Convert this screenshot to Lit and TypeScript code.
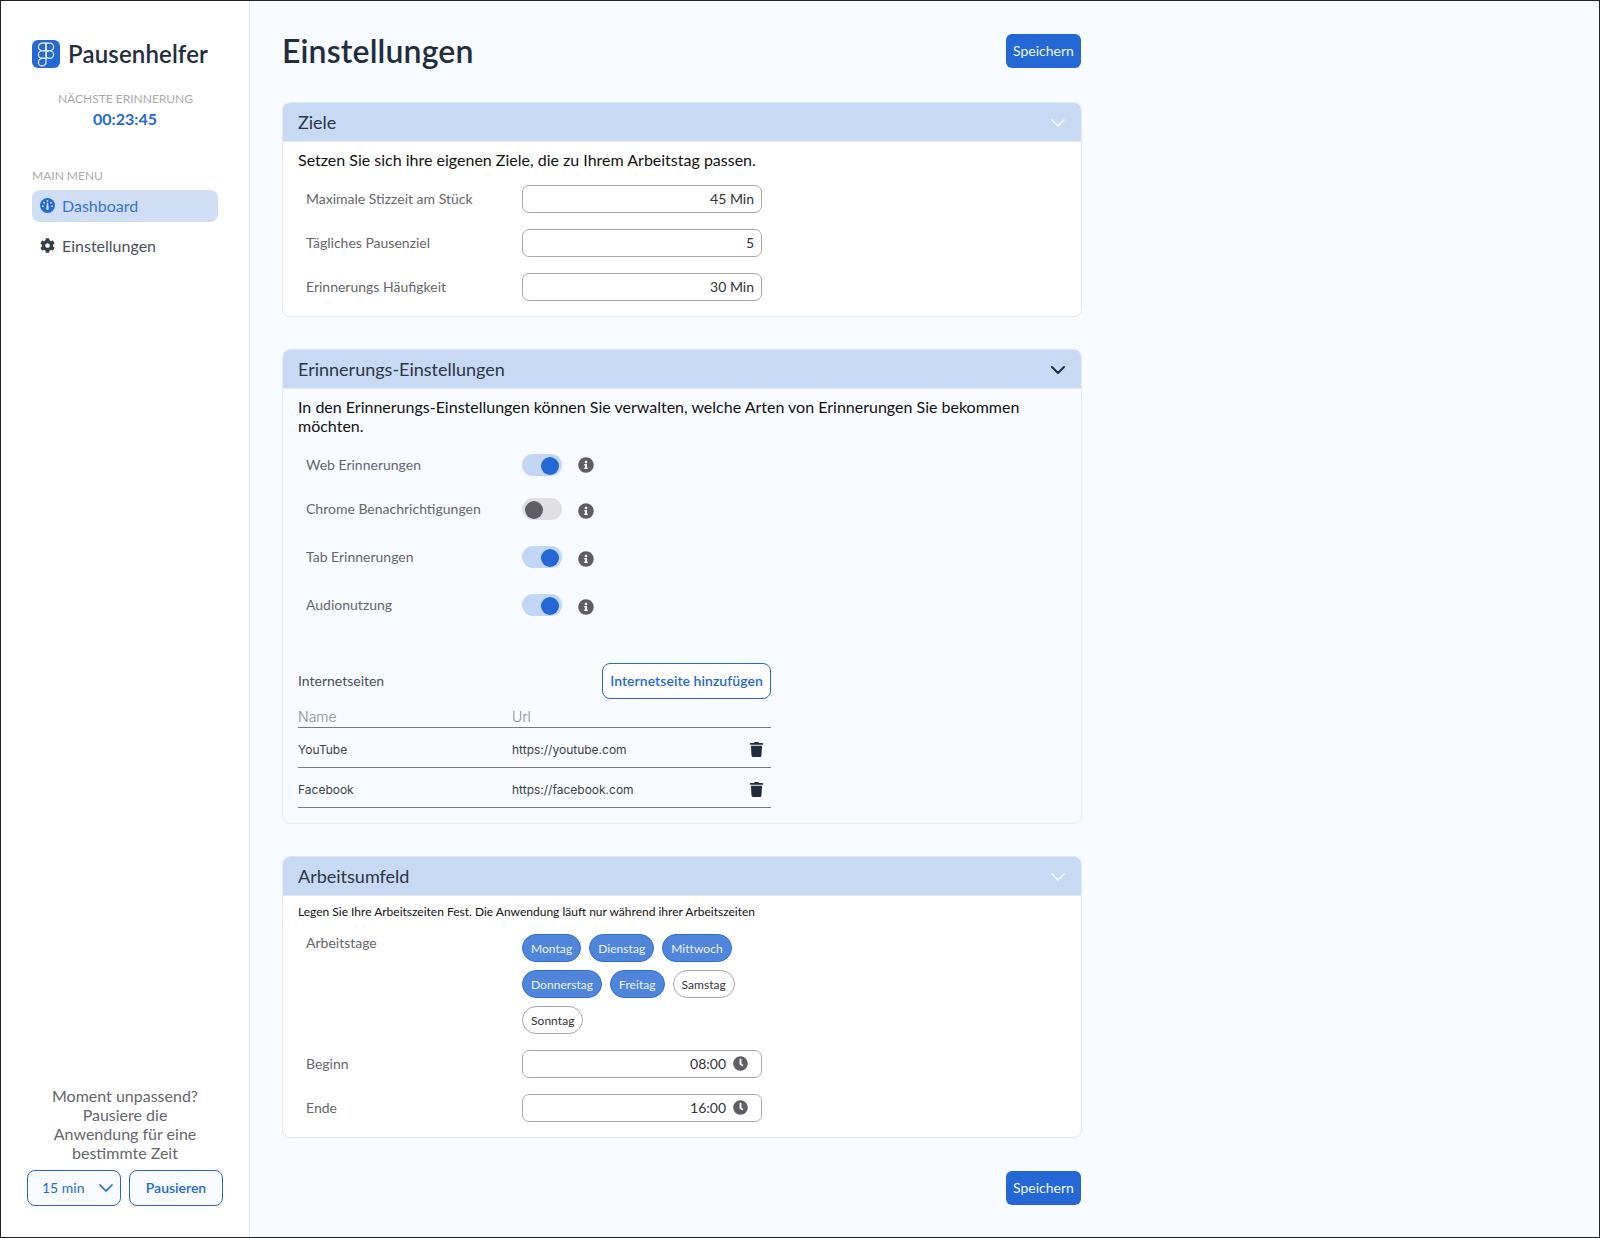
import { LitElement, html, css, svg } from "lit";
import { customElement } from "lit/decorators.js";

const figma = html`<svg viewBox="0 0 24 24" width="26" height="26" fill="none" stroke="#f2f6fd" stroke-width="1.1">
  <path d="M5 5.5A3.5 3.5 0 0 1 8.5 2H12v7H8.5A3.5 3.5 0 0 1 5 5.5z"></path>
  <path d="M12 2h3.5a3.5 3.5 0 1 1 0 7H12V2z"></path>
  <path d="M12 12.5a3.5 3.5 0 1 1 7 0 3.5 3.5 0 1 1-7 0z"></path>
  <path d="M5 19.5A3.5 3.5 0 0 1 8.5 16H12v3.5a3.5 3.5 0 1 1-7 0z"></path>
  <path d="M5 12.5A3.5 3.5 0 0 1 8.5 9H12v7H8.5A3.5 3.5 0 0 1 5 12.5z"></path>
</svg>`;

const gauge = html`<svg viewBox="0 0 24 24" width="15" height="15">
  <circle cx="12" cy="12" r="12" fill="#2468d5"></circle>
  <circle cx="12" cy="4.5" r="1.5" fill="#cfdef5"></circle>
  <circle cx="6.5" cy="7.5" r="1.5" fill="#cfdef5"></circle>
  <circle cx="17.5" cy="7.5" r="1.5" fill="#cfdef5"></circle>
  <circle cx="4.5" cy="13" r="1.5" fill="#cfdef5"></circle>
  <circle cx="19.5" cy="13" r="1.5" fill="#cfdef5"></circle>
  <path d="M11 7.5h2l1 9.5a2 2 0 0 1-4 0z" fill="#cfdef5"></path>
</svg>`;

const cog = html`<svg viewBox="0 0 512 512" width="15" height="15" fill="#333d4c"><path d="M487.4 315.7l-42.6-24.6c4.3-23.2 4.3-47 0-70.2l42.6-24.6c4.9-2.8 7.1-8.6 5.5-14-11.1-35.6-30-67.8-54.7-94.6-3.8-4.1-10-5.1-14.8-2.3L380.8 110c-17.9-15.4-38.5-27.3-60.8-35.1V25.8c0-5.6-3.9-10.5-9.4-11.7-36.7-8.2-74.3-7.8-109.2 0-5.5 1.2-9.4 6.1-9.4 11.7V75c-22.2 7.9-42.8 19.8-60.8 35.1L88.7 85.5c-4.9-2.8-11-1.9-14.8 2.3-24.7 26.7-43.6 58.9-54.7 94.6-1.7 5.4.6 11.2 5.5 14L67.3 221c-4.3 23.2-4.3 47 0 70.2l-42.6 24.6c-4.9 2.8-7.1 8.6-5.5 14 11.1 35.6 30 67.8 54.7 94.6 3.8 4.1 10 5.1 14.8 2.3l42.6-24.6c17.9 15.4 38.5 27.3 60.8 35.1v49.2c0 5.6 3.9 10.5 9.4 11.7 36.7 8.2 74.3 7.8 109.2 0 5.5-1.2 9.4-6.1 9.4-11.7v-49.2c22.2-7.9 42.8-19.8 60.8-35.1l42.6 24.6c4.9 2.8 11 1.9 14.8-2.3 24.7-26.7 43.6-58.9 54.7-94.6 1.5-5.5-.7-11.3-5.6-14.1zM256 336c-44.1 0-80-35.9-80-80s35.9-80 80-80 80 35.9 80 80-35.9 80-80 80z"></path></svg>`;

const info = html`<svg class="info" viewBox="0 0 512 512" width="16" height="16" fill="#5f5d66"><path d="M256 8C119.043 8 8 119.083 8 256c0 136.997 111.043 248 248 248s248-111.003 248-248C504 119.083 392.957 8 256 8zm0 110c23.196 0 42 18.804 42 42s-18.804 42-42 42-42-18.804-42-42 18.804-42 42-42zm56 254c0 6.627-5.373 12-12 12h-88c-6.627 0-12-5.373-12-12v-24c0-6.627 5.373-12 12-12h12v-64h-12c-6.627 0-12-5.373-12-12v-24c0-6.627 5.373-12 12-12h64c6.627 0 12 5.373 12 12v100h12c6.627 0 12 5.373 12 12v24z"></path></svg>`;

const clock = html`<svg viewBox="0 0 512 512" width="15" height="15" fill="#5f5d66"><path d="M256,8C119,8,8,119,8,256S119,504,256,504,504,393,504,256,393,8,256,8Zm92.49,313h0l-20,25a16,16,0,0,1-22.49,2.5h0l-67-49.72a40,40,0,0,1-15-31.23V112a16,16,0,0,1,16-16h32a16,16,0,0,1,16,16V256l58,42.5A16,16,0,0,1,348.49,321Z"></path></svg>`;

const trash = html`<svg viewBox="0 0 448 512" width="13" height="15" fill="#222d3d"><path d="M432 32H312l-9.4-18.7A24 24 0 0 0 281.1 0H166.8a23.72 23.72 0 0 0-21.4 13.3L136 32H16A16 16 0 0 0 0 48v32a16 16 0 0 0 16 16h416a16 16 0 0 0 16-16V48a16 16 0 0 0-16-16zM53.2 467a48 48 0 0 0 47.9 45h245.8a48 48 0 0 0 47.9-45L416 128H32z"></path></svg>`;

const chevron = (color: string, w = 14, weight = 1.7) => html`<svg class="chev" viewBox="0 0 14 8" width=${w} height=${Math.round((w * 8) / 14)} fill="none">
  ${svg`<path d="M1 1l6 6 6-6" stroke=${color} stroke-width=${weight} stroke-linecap="round" stroke-linejoin="round"></path>`}
</svg>`;

const goals = [
  { label: "Maximale Stizzeit am Stück", value: "45 Min" },
  { label: "Tägliches Pausenziel", value: "5" },
  { label: "Erinnerungs Häufigkeit", value: "30 Min" },
];

const reminders = [
  { label: "Web Erinnerungen", on: true, cls: "r1" },
  { label: "Chrome Benachrichtigungen", on: false, cls: "r2" },
  { label: "Tab Erinnerungen", on: true, cls: "r2" },
  { label: "Audionutzung", on: true, cls: "r2" },
];

const sites = [
  { name: "YouTube", url: "https://youtube.com" },
  { name: "Facebook", url: "https://facebook.com" },
];

const days = [
  { name: "Montag", on: true },
  { name: "Dienstag", on: true },
  { name: "Mittwoch", on: true },
  { name: "Donnerstag", on: true },
  { name: "Freitag", on: true },
  { name: "Samstag", on: false },
  { name: "Sonntag", on: false },
];

@customElement("app-root")
export class AppRoot extends LitElement {
  static styles = css`
    :host {
      display: flex;
      box-sizing: border-box;
      width: 1600px;
      height: 1238px;
      border: 1px solid #222;
      font-family: "Lato", sans-serif;
      background: #f8fbff;
      color: #222d3d;
      overflow: hidden;
    }
    * {
      box-sizing: border-box;
    }

    .sidebar {
      width: 249px;
      flex: none;
      background: #fff;
      border-right: 1px solid #e5e8ef;
      display: flex;
      flex-direction: column;
      padding: 39px 30px 31px 31px;
    }
    .brand {
      display: flex;
      align-items: center;
      gap: 8px;
      height: 29px;
      font-size: 24px;
      font-weight: 600;
      letter-spacing: 0.15px;
      color: #222d3d;
      white-space: nowrap;
    }
    .brand b {
      font-weight: inherit;
      margin-bottom: 2px;
    }
    .logo {
      align-self: flex-start;
      width: 28px;
      height: 28px;
      border-radius: 6px;
      background: #2468d5;
      display: flex;
      align-items: center;
      justify-content: center;
    }
    .next {
      margin-top: 22px;
      text-align: center;
      font-size: 12px;
      line-height: 15px;
      color: #a9a9ae;
      white-space: nowrap;
    }
    .timer {
      margin-top: 3px;
      padding-right: 1px;
      text-align: center;
      font-weight: 700;
      font-size: 16px;
      line-height: 20px;
      color: #2468d5;
    }
    .menu-title {
      margin-top: 39px;
      font-size: 12px;
      line-height: 15px;
      color: #a9a9ae;
    }
    .menu {
      margin-top: 7px;
      display: flex;
      flex-direction: column;
      gap: 8px;
    }
    .menu-item {
      height: 32px;
      width: 186px;
      border-radius: 8px;
      display: flex;
      align-items: center;
      gap: 7px;
      padding: 0 0 1px 8px;
      font-size: 16px;
      color: #4a4f5a;
    }
    .menu-item.active {
      background: #cfdef5;
      color: #3a72d0;
    }
    .pause {
      margin-top: auto;
      margin-left: -5px;
      margin-right: -4px;
    }
    .pause p {
      margin: 0 0 8px;
      padding: 0 22px;
      text-align: center;
      font-size: 16px;
      line-height: 19px;
      color: #66666c;
    }
    .pause-row {
      display: flex;
      gap: 8px;
    }
    .pick,
    .outline {
      height: 36px;
      border: 1px solid #2468d5;
      border-radius: 8px;
      background: #f8fbff;
      color: #2468d5;
      font-size: 14px;
      display: flex;
      align-items: center;
      font-family: inherit;
    }
    .pick {
      width: 94px;
      padding: 0 7px 1px 14px;
      justify-content: space-between;
    }
    .outline {
      flex: 1;
      justify-content: center;
      font-weight: 600;
      padding: 0 0 1px;
    }

    .main {
      width: 832px;
      padding: 33px 0 0 32px;
      display: flex;
      flex-direction: column;
    }
    .top {
      height: 34px;
      display: flex;
      align-items: center;
      justify-content: space-between;
      margin-bottom: 34px;
    }
    h1 {
      margin: 0 0 2px;
      font-size: 32px;
      font-weight: 600;
      letter-spacing: 0.15px;
      color: #222d3d;
    }
    .save {
      width: 75px;
      height: 34px;
      margin-right: 1px;
      border: 0;
      border-radius: 6px;
      background: #2468d5;
      color: #f2f6fd;
      font-family: inherit;
      font-size: 14px;
      padding: 0 0 2px;
    }
    .section {
      border: 1px solid #e5e8ef;
      border-radius: 8px;
      overflow: hidden;
      margin-bottom: 32px;
    }
    .section.white {
      background: #fff;
    }
    .head {
      height: 39px;
      background: #c8d9f3;
      border-bottom: 1px solid #e5e8ef;
      display: flex;
      align-items: center;
      justify-content: space-between;
      padding: 0 16px 0 15px;
      font-size: 18px;
      color: #2b3646;
    }
    .head .chev {
      margin-top: 2px;
    }
    .body {
      padding: 8px 15px 15px;
    }
    .body.compact {
      padding-top: 7px;
    }
    .desc {
      margin: 0;
      font-size: 16px;
      line-height: 19px;
      color: #111;
    }
    .desc.small {
      font-size: 12px;
      line-height: 15px;
      padding-top: 1px;
    }
    .fields {
      margin-top: 16px;
      display: flex;
      flex-direction: column;
      gap: 16px;
    }
    .field {
      display: flex;
      align-items: center;
      height: 28px;
      padding-left: 8px;
    }
    .label {
      width: 216px;
      flex: none;
      font-size: 14px;
      color: #66666c;
      padding-bottom: 1px;
    }
    .input {
      width: 240px;
      height: 28px;
      border: 1px solid #a9a9ae;
      border-radius: 7px;
      background: #fff;
      display: flex;
      align-items: center;
      justify-content: flex-end;
      gap: 6px;
      padding: 0 7px 1px;
      font-size: 14px;
      color: #33333a;
    }
    .input.time {
      gap: 7px;
      padding-right: 13px;
    }

    .toggles {
      margin-top: 19px;
      padding-left: 8px;
    }
    .toggle-row {
      display: flex;
      align-items: center;
      height: 22px;
    }
    .toggle-row.r2 {
      margin-top: 26px;
    }
    .toggle-row.r2:nth-child(2) {
      margin-top: 22px;
    }
    .switch {
      width: 40px;
      height: 22px;
      border-radius: 11px;
      background: #e0e0e2;
      padding: 3px;
      display: flex;
    }
    .switch i {
      width: 18px;
      height: 18px;
      border-radius: 50%;
      background: #5f5d66;
    }
    .switch.on {
      background: #c3d6f3;
      justify-content: flex-end;
    }
    .switch.on i {
      background: #2468d5;
    }
    .info {
      margin-left: 16px;
    }
    .r2 .info {
      margin-top: 3px;
    }

    .sites {
      margin-top: 47px;
      width: 473px;
    }
    .sites-head {
      display: flex;
      align-items: center;
      justify-content: space-between;
      font-size: 14px;
      color: #4a4f5a;
    }
    .sites-head span {
      padding-bottom: 2px;
    }
    .add {
      height: 36px;
      width: 169px;
      border: 1px solid #2468d5;
      border-radius: 8px;
      background: #fff;
      color: #2468d5;
      font-family: inherit;
      font-size: 14px;
      font-weight: 600;
      letter-spacing: 0.05px;
      padding: 0 0 2px;
    }
    .site-row {
      display: grid;
      grid-template-columns: 214px 1fr 16px;
      align-items: center;
      height: 40px;
      padding: 4px 5px 0 0;
      border-bottom: 1px solid #77777c;
      font-family: "Inter", sans-serif;
      font-size: 12px;
      color: #3c3f48;
    }
    .site-row.header {
      height: 29px;
      padding-top: 6px;
      font-size: 14px;
      color: #8a8a90;
      font-weight: 300;
    }

    .days-field {
      margin-top: 15px;
      display: flex;
      padding-left: 8px;
    }
    .days-field .label {
      line-height: 17px;
    }
    .days {
      width: 240px;
      display: flex;
      flex-wrap: wrap;
      gap: 8px;
    }
    .day {
      height: 28px;
      border-radius: 14px;
      border: 1px solid #a9a9ae;
      padding: 0 8px;
      display: flex;
      align-items: center;
      font-size: 12px;
      letter-spacing: 0.05px;
      color: #33333a;
      background: #fff;
    }
    .day.on {
      background: #4f86db;
      border-color: #2f6fd6;
      color: #eef4fc;
    }
    .bottom {
      display: flex;
      justify-content: flex-end;
      margin-top: 1px;
    }
  `;

  render() {
    return html`
      <aside class="sidebar">
        <div class="brand"><span class="logo">${figma}</span><b>Pausenhelfer</b></div>
        <div class="next">NÄCHSTE ERINNERUNG</div>
        <div class="timer">00:23:45</div>
        <div class="menu-title">MAIN MENU</div>
        <nav class="menu">
          <div class="menu-item active">${gauge}Dashboard</div>
          <div class="menu-item">${cog}Einstellungen</div>
        </nav>
        <div class="pause">
          <p>Moment unpassend? Pausiere die Anwendung für eine bestimmte Zeit</p>
          <div class="pause-row">
            <div class="pick">15 min ${chevron("#2468d5", 14, 1.7)}</div>
            <button class="outline">Pausieren</button>
          </div>
        </div>
      </aside>

      <main class="main">
        <div class="top">
          <h1>Einstellungen</h1>
          <button class="save">Speichern</button>
        </div>

        <section class="section white">
          <div class="head">Ziele ${chevron("#f2f6fd")}</div>
          <div class="body">
            <p class="desc">Setzen Sie sich ihre eigenen Ziele, die zu Ihrem Arbeitstag passen.</p>
            <div class="fields">
              ${goals.map(
                (g) => html`<div class="field">
                  <span class="label">${g.label}</span>
                  <span class="input">${g.value}</span>
                </div>`
              )}
            </div>
          </div>
        </section>

        <section class="section">
          <div class="head">Erinnerungs-Einstellungen ${chevron("#222d3d", 14, 2)}</div>
          <div class="body">
            <p class="desc">
              In den Erinnerungs-Einstellungen können Sie verwalten, welche Arten von Erinnerungen Sie bekommen möchten.
            </p>
            <div class="toggles">
              ${reminders.map(
                (r) => html`<div class="toggle-row ${r.cls}">
                  <span class="label">${r.label}</span>
                  <span class="switch ${r.on ? "on" : ""}"><i></i></span>
                  ${info}
                </div>`
              )}
            </div>
            <div class="sites">
              <div class="sites-head">
                <span>Internetseiten</span>
                <button class="add">Internetseite hinzufügen</button>
              </div>
              <div class="site-row header"><span>Name</span><span>Url</span></div>
              ${sites.map(
                (s) => html`<div class="site-row">
                  <span>${s.name}</span><span>${s.url}</span>${trash}
                </div>`
              )}
            </div>
          </div>
        </section>

        <section class="section white">
          <div class="head">Arbeitsumfeld ${chevron("#f2f6fd")}</div>
          <div class="body compact">
            <p class="desc small">Legen Sie Ihre Arbeitszeiten Fest. Die Anwendung läuft nur während ihrer Arbeitszeiten</p>
            <div class="days-field">
              <span class="label">Arbeitstage</span>
              <div class="days">
                ${days.map((d) => html`<span class="day ${d.on ? "on" : ""}">${d.name}</span>`)}
              </div>
            </div>
            <div class="fields">
              <div class="field"><span class="label">Beginn</span><span class="input time">08:00 ${clock}</span></div>
              <div class="field"><span class="label">Ende</span><span class="input time">16:00 ${clock}</span></div>
            </div>
          </div>
        </section>

        <div class="bottom"><button class="save">Speichern</button></div>
      </main>
    `;
  }
}
